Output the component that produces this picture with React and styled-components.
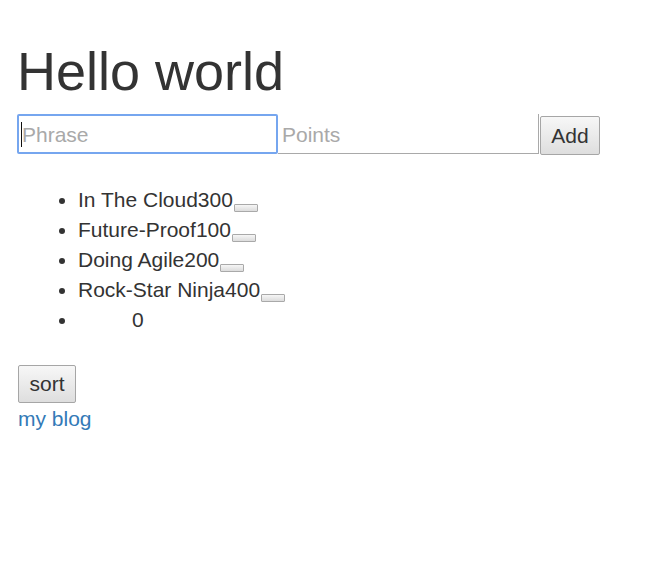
import React from "react";
import styled, { createGlobalStyle } from "styled-components";

const Global = createGlobalStyle`
  html, body { margin: 0; padding: 0; background: #fff; }
  body {
    font-family: "Liberation Sans", Arial, sans-serif;
    font-size: 21px;
    line-height: 30px;
    color: #333;
  }
`;

const Page = styled.div`
  padding: 0 17px;
`;

const Title = styled.h1`
  font-size: 54px;
  font-weight: 500;
  line-height: 1.1;
  margin: 42px 0 13px;
`;

const Form = styled.div`
  display: flex;
  align-items: flex-start;
`;

const Field = styled.span`
  position: relative;
  display: inline-block;
  ${(p) =>
    p.$caret &&
    `&::after {
      content: "";
      position: absolute;
      left: 4px;
      top: 8px;
      width: 1px;
      height: 25px;
      background: #111;
      pointer-events: none;
    }`}
`;

const Input = styled.input`
  display: block;
  box-sizing: border-box;
  width: 261px;
  height: 40px;
  font-family: inherit;
  font-size: 21px;
  color: #333;
  background: #fff;
  padding: 2px 3px 0;
  margin: 0;
  outline: none;
  caret-color: transparent;
  ${(p) =>
    p.$focused
      ? `border: 2px solid #76a6ef; border-radius: 2px;`
      : `border: none; border-bottom: 1px solid #a9a9a9; border-right: 1px solid #a9a9a9; padding-left: 4px;`}
  &::placeholder { color: #a9a9a9; opacity: 1; }
`;

const Button = styled.button`
  box-sizing: border-box;
  font-family: inherit;
  font-size: 21px;
  color: #333;
  width: ${(p) => p.$w}px;
  height: ${(p) => p.$h}px;
  padding: 0;
  margin: ${(p) => p.$m || 0};
  border: 1px solid #a6a6a6;
  border-radius: 2px;
  background: linear-gradient(#f7f7f7, #dedede);
  display: flex;
  align-items: center;
  justify-content: center;
`;

const List = styled.ul`
  margin: 30px 0 30px;
  padding-left: 61px;
  list-style: disc;
`;

const Item = styled.li`
  line-height: 30px;
`;

const Blank = styled.span`
  display: inline-block;
  width: 54px;
`;

const Tiny = styled.button`
  display: inline-block;
  box-sizing: border-box;
  width: 24px;
  height: 8px;
  padding: 0;
  margin: 0 0 0 1px;
  vertical-align: -4px;
  border: 1px solid #a9a9a9;
  border-radius: 1px;
  background: linear-gradient(#f6f6f6, #dcdcdc);
`;

const Link = styled.a`
  display: block;
  color: #337ab7;
  text-decoration: none;
  line-height: 30px;
  margin: 1px 0 0 1px;
`;

const items = [
  ["In The Cloud", 300],
  ["Future-Proof", 100],
  ["Doing Agile", 200],
  ["Rock-Star Ninja", 400],
];

export default function App() {
  return (
    <Page>
      <Global />
      <Title>Hello world</Title>
      <Form>
        <Field $caret>
          <Input $focused placeholder="Phrase" />
        </Field>
        <Field>
          <Input placeholder="Points" />
        </Field>
        <Button $w={60} $h={39} $m="2px 0 0 1px">Add</Button>
      </Form>
      <List>
        {items.map(([p, n]) => (
          <Item key={p}>
            {p}
            {n}
            <Tiny />
          </Item>
        ))}
        <Item>
          <Blank />0
        </Item>
      </List>
      <Button $w={58} $h={38} $m="0 0 0 1px">sort</Button>
      <Link href="#">my blog</Link>
    </Page>
  );
}
